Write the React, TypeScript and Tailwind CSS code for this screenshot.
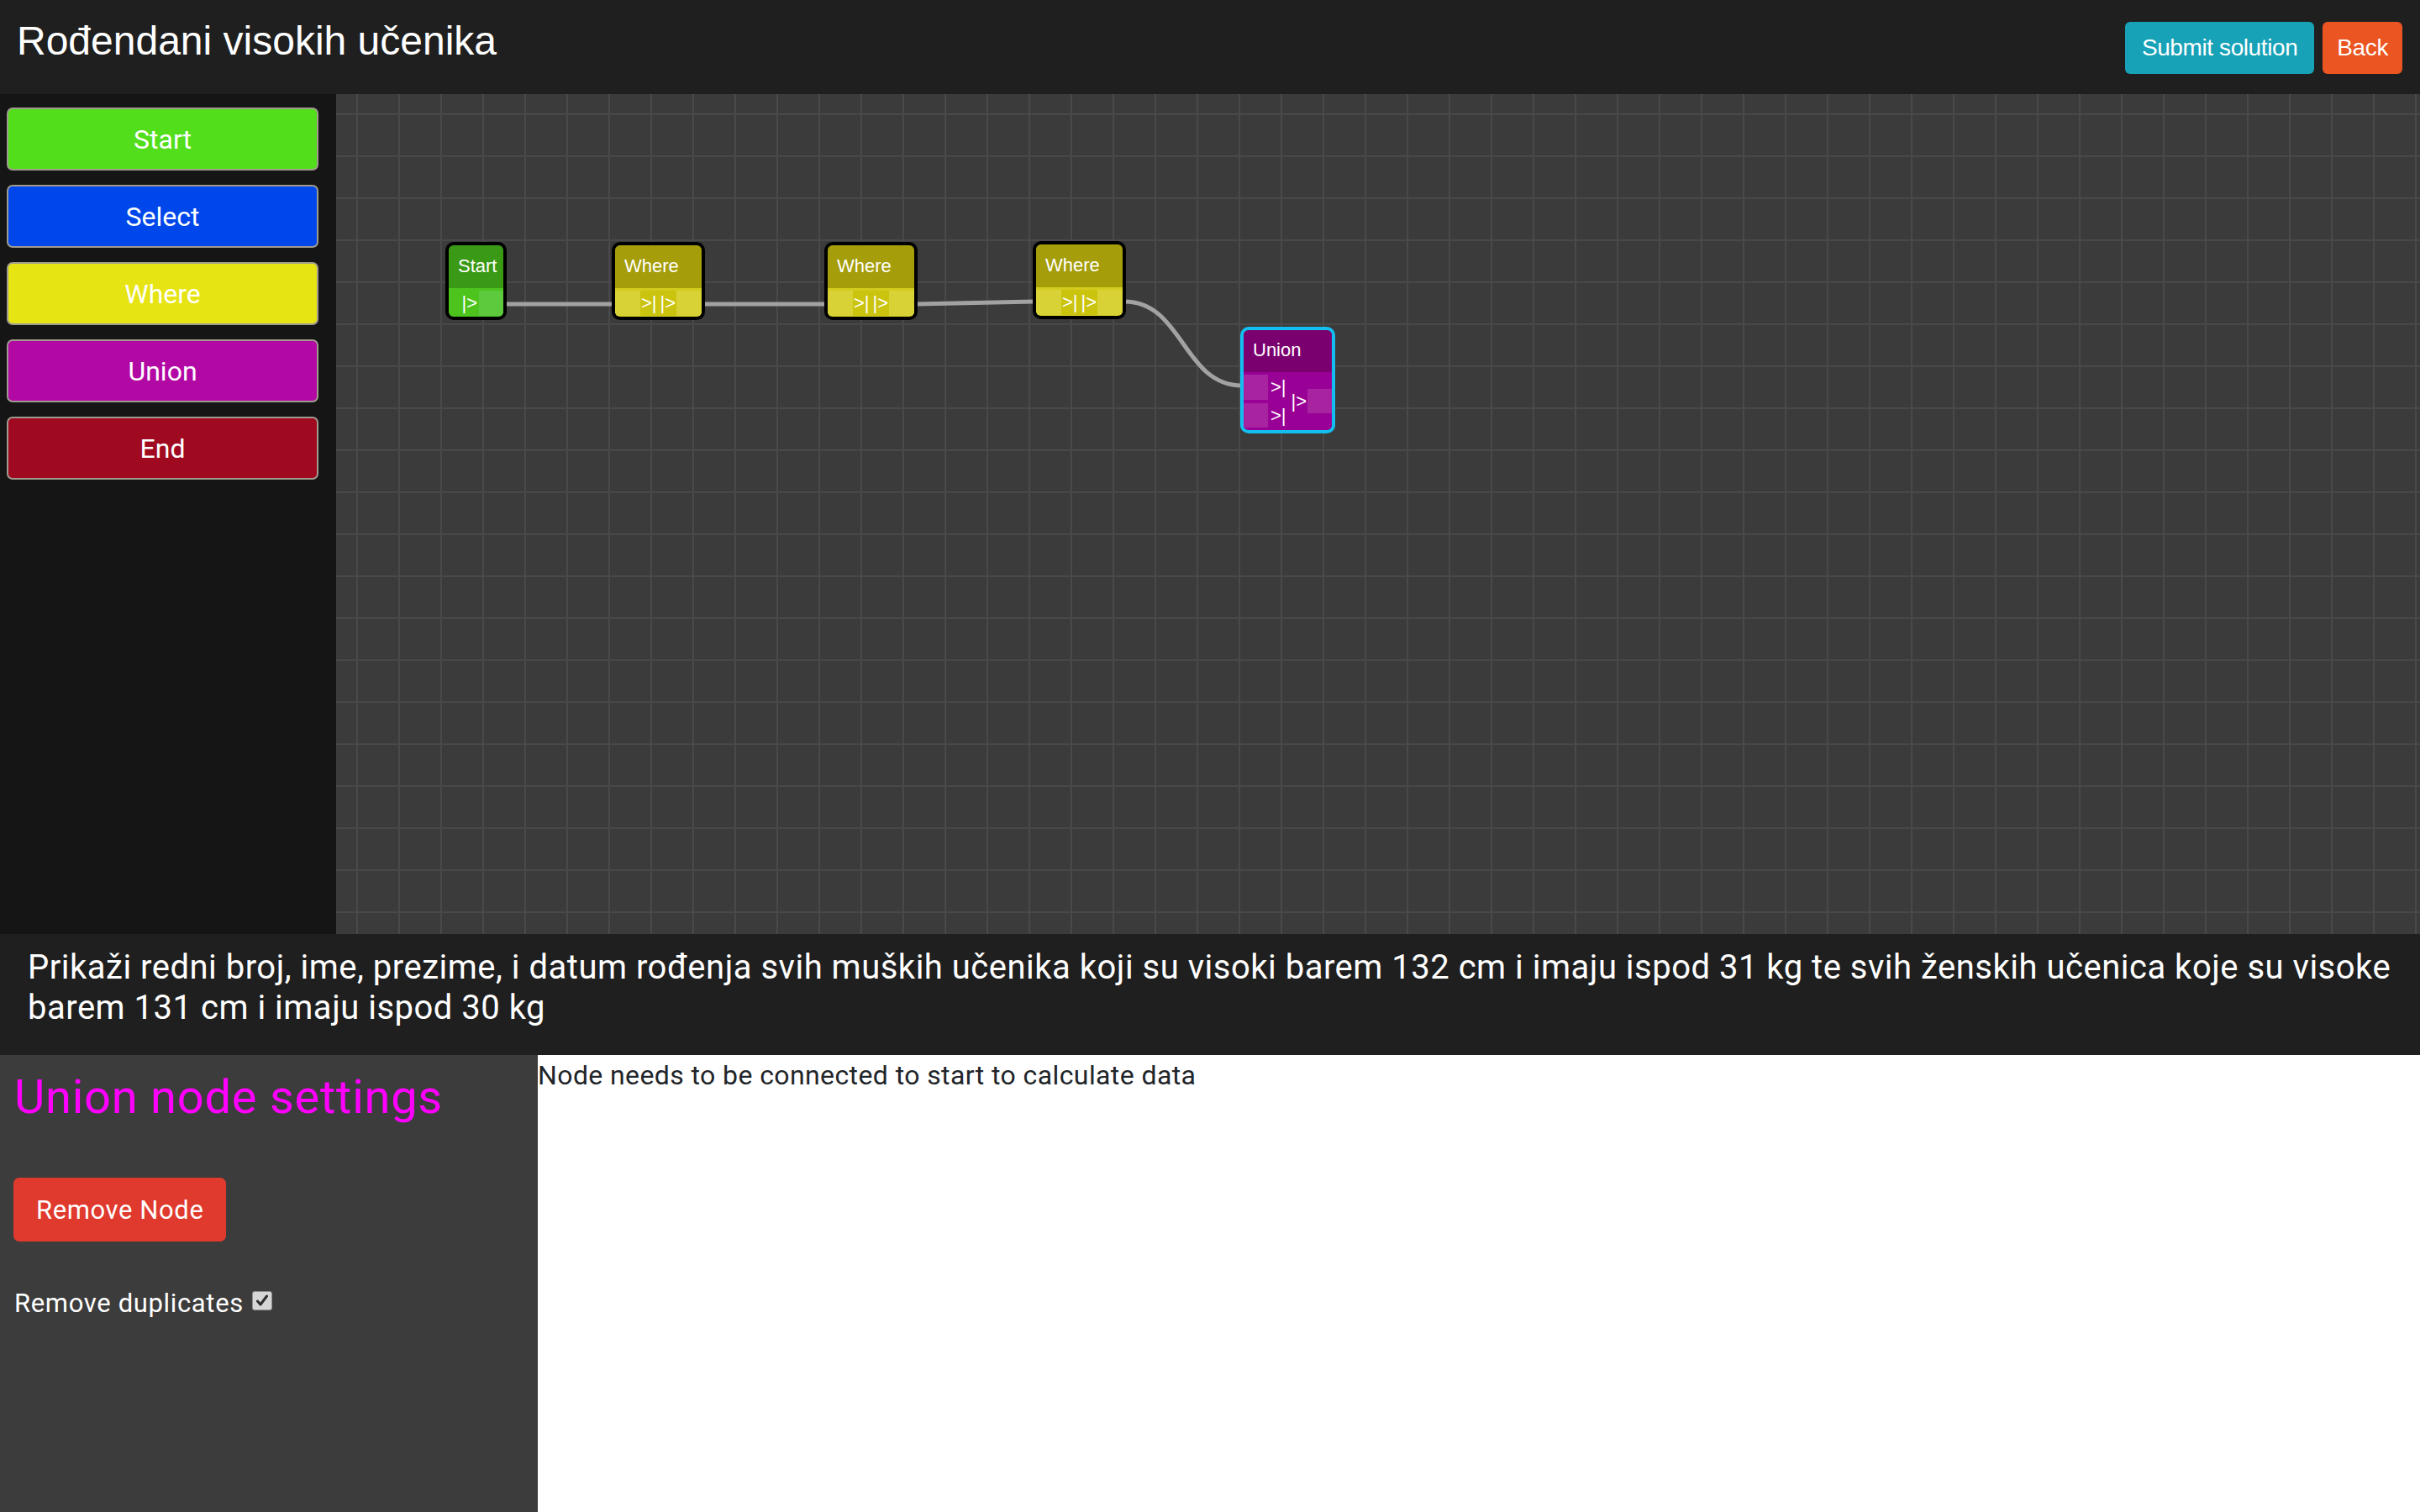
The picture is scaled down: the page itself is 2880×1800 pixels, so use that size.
import React from "react";

function SideButton({ label, color }: { label: string; color: string }) {
  return (
    <button
      className={`w-[371px] h-[75px] shrink-0 border-2 border-[#a09b8f] rounded-[7px] text-[32px] leading-[38px] text-white font-['Roboto',sans-serif] ${color}`}
    >
      {label}
    </button>
  );
}

function PortLabel({ children, extra = "" }: { children: React.ReactNode; extra?: string }) {
  return (
    <span className={`text-[22px] leading-[26px] text-white font-['Liberation_Sans',Arial,sans-serif] whitespace-pre ${extra}`}>
      {children}
    </span>
  );
}

function WhereNode({ pos }: { pos: string }) {
  return (
    <div className={`absolute ${pos} w-[111px] border-4 border-black rounded-[10px] overflow-hidden`}>
      <div className="h-[51px] bg-[#a59e0a] pl-[11px] pt-[12px] text-[22px] leading-[26px] text-white font-['Liberation_Sans',Arial,sans-serif]">
        Where
      </div>
      <div className="h-[34px] bg-[#d3cc1e] flex items-center pt-[2px]">
        <div className="w-[30px] h-[30px] bg-[#d8d236]" />
        <div className="flex-1 h-[30px] bg-[#cbc40e] flex items-center justify-center gap-[4px]">
          <PortLabel>&gt;|</PortLabel>
          <PortLabel>|&gt;</PortLabel>
        </div>
        <div className="w-[30px] h-[30px] bg-[#d8d236]" />
      </div>
    </div>
  );
}

export default function App() {
  return (
    <div className="w-[2880px] h-[1800px] flex flex-col overflow-hidden font-['Roboto',sans-serif]">
      {/* Header */}
      <header className="h-[112px] shrink-0 bg-[#1f1f1f] flex justify-between items-start">
        <h1 className="mt-[21px] ml-[20px] text-[48px] leading-[55px] text-white font-normal font-['Liberation_Sans',Arial,sans-serif]">
          Rođendani visokih učenika
        </h1>
        <div className="flex gap-[10px] mt-[26px] mr-[21px]">
          <button className="h-[62px] px-[20px] rounded-[6px] bg-[#17a2b8] text-white text-[28px] tracking-[-0.4px] font-['Liberation_Sans',Arial,sans-serif]">
            Submit solution
          </button>
          <button className="h-[62px] px-[17px] rounded-[6px] bg-[#ea5522] text-white text-[28px] tracking-[-0.4px] font-['Liberation_Sans',Arial,sans-serif]">
            Back
          </button>
        </div>
      </header>

      {/* Main */}
      <div className="h-[1000px] shrink-0 flex">
        <aside className="w-[400px] shrink-0 bg-[#151515] pt-[16px] pl-[8px] flex flex-col gap-[17px]">
          <SideButton label="Start" color="bg-[#52de1a]" />
          <SideButton label="Select" color="bg-[#0047eb]" />
          <SideButton label="Where" color="bg-[#e7e413]" />
          <SideButton label="Union" color="bg-[#b208a4]" />
          <SideButton label="End" color="bg-[#a00a20]" />
        </aside>

        <div className="relative flex-1 overflow-hidden bg-[#3b3b3b] [background-image:linear-gradient(to_right,#494949_2px,transparent_2px),linear-gradient(to_bottom,#494949_2px,transparent_2px)] [background-size:50px_50px] [background-position:24px_23px]">
          <svg className="absolute inset-0 w-full h-full" xmlns="http://www.w3.org/2000/svg">
            <g fill="none" stroke="#a2a2a2" strokeWidth="5">
              <path d="M203 250 L330 250" />
              <path d="M437 250 L582 250" />
              <path d="M690 250 L831 247" />
              <path d="M938 247 C1008 247 1008 347 1078 347" />
            </g>
          </svg>

          {/* Start node */}
          <div className="absolute left-[130px] top-[176px] w-[73px] border-4 border-black rounded-[10px] overflow-hidden">
            <div className="h-[51px] bg-[#3a9915] pl-[11px] pt-[12px] text-[22px] leading-[26px] text-white font-['Liberation_Sans',Arial,sans-serif]">
              Start
            </div>
            <div className="h-[34px] bg-[#4cc41d] flex items-center justify-end pt-[2px]">
              <PortLabel extra="mr-[2px]">|&gt;</PortLabel>
              <div className="w-[29px] h-[30px] bg-[#5cca3c]" />
            </div>
          </div>

          <WhereNode pos="left-[328px] top-[176px]" />
          <WhereNode pos="left-[581px] top-[176px]" />
          <WhereNode pos="left-[829px] top-[175px]" />

          {/* Union node */}
          <div className="absolute left-[1076px] top-[277px] w-[113px] border-4 border-[#12bff0] rounded-[10px] overflow-hidden">
            <div className="h-[50px] bg-[#7b006f] pl-[11px] pt-[11px] text-[22px] leading-[26px] text-white font-['Liberation_Sans',Arial,sans-serif]">
              Union
            </div>
            <div className="h-[69px] bg-[#990095] flex">
              <div className="flex flex-col pt-[3px] gap-[4px]">
                <div className="flex items-center">
                  <div className="w-[29px] h-[30px] bg-[#a8239f]" />
                  <PortLabel extra="ml-[3px] text-[20px]">&gt;|</PortLabel>
                </div>
                <div className="flex items-center">
                  <div className="w-[29px] h-[29px] bg-[#a8239f]" />
                  <PortLabel extra="ml-[3px] text-[20px]">&gt;|</PortLabel>
                </div>
              </div>
              <PortLabel extra="self-center ml-[6px] text-[20px]">|&gt;</PortLabel>
              <div className="ml-auto self-center w-[29px] h-[29px] bg-[#a8239f]" />
            </div>
          </div>
        </div>
      </div>

      {/* Description */}
      <div className="h-[144px] shrink-0 bg-[#1f1f1f] pl-[33px] pr-[12px] pt-[16px] text-[40px] leading-[48px] tracking-[0.5px] text-white">
        <p>
          Prikaži redni broj, ime, prezime, i datum rođenja svih muških učenika koji su visoki barem 132 cm i imaju ispod 31 kg te svih ženskih učenica koje su visoke
          <br />
          barem 131 cm i imaju ispod 30 kg
        </p>
      </div>

      {/* Bottom */}
      <div className="flex-1 flex">
        <div className="w-[640px] shrink-0 bg-[#3c3c3c] pl-[17px] pt-[17px] flex flex-col items-start">
          <h2 className="text-[56px] leading-[67px] tracking-[0.75px] text-[#ff00ff] font-normal">Union node settings</h2>
          <button className="mt-[62px] -ml-[1px] h-[76px] px-[27px] rounded-[7px] bg-[#e0392d] text-white text-[31px] leading-[37px] tracking-[0.6px]">
            Remove Node
          </button>
          <div className="mt-[55px] flex items-center gap-[10px] text-[31px] leading-[37px] tracking-[0.65px] text-white">
            <span>Remove duplicates</span>
            <span className="mb-[7px] w-[24px] h-[23px] rounded-[3px] bg-[#d6d6d6] border border-[#8e8e8e] flex items-center justify-center">
              <svg width="16" height="15" viewBox="0 0 16 15">
                <path d="M2.5 8 L6 12 L13.5 2" fill="none" stroke="#2e2e2e" strokeWidth="3" strokeLinecap="round" strokeLinejoin="round" />
              </svg>
            </span>
          </div>
        </div>
        <div className="flex-1 bg-white pt-[6px] text-[32px] leading-[37px] tracking-[0.4px] text-[#212529]">
          Node needs to be connected to start to calculate data
        </div>
      </div>
    </div>
  );
}
